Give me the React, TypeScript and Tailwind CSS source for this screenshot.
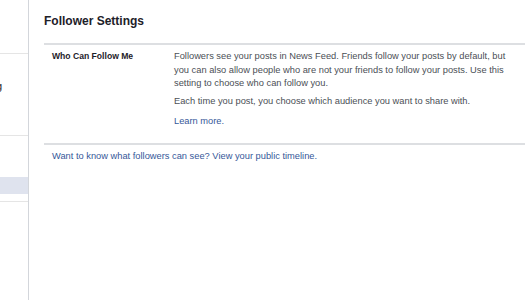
export default function App() {
  return (
    <div
      className="flex h-[300px] w-[525px] overflow-hidden bg-white text-[#1d2129]"
      style={{ fontFamily: '"Liberation Sans", Arial, sans-serif' }}
    >
      {/* left nav, mostly cut off */}
      <aside className="flex w-[29px] shrink-0 flex-col border-r border-[#d3d6db]">
        <div className="h-[54px] border-b border-[#e5e5e5]" />
        <div className="flex h-[82px] items-start border-b border-[#e5e5e5] pt-[25px]">
          <span className="-ml-[4px] text-[11px] leading-[14px] text-[#1d2129]">g</span>
        </div>
        <div className="h-[41px]" />
        <div className="h-[17px] bg-[#dfe3ee]" />
        <div className="h-[7px]" />
        <div className="border-t border-[#e5e5e5]" />
      </aside>

      <main className="flex-1 pl-[15px] pt-[13px]">
        <h2 className="text-[12px] font-bold leading-[16px] text-[#1d2129]">Follower Settings</h2>
        <div className="mt-[14px] border-t-2 border-[#dddfe2]" />

        <div className="flex pb-[14px] pt-[5px] text-[9.3px] leading-[13.5px]">
          <div className="w-[130px] shrink-0 pl-[8px] text-[8.6px] font-bold text-[#1d2129]">Who Can Follow Me</div>
          <div className="w-[336px] text-[#4b4f56]">
            <p>
              Followers see your posts in News Feed. Friends follow your posts by default, but you can also allow
              people who are not your friends to follow your posts. Use this setting to choose who can follow you.
            </p>
            <p className="mt-[4.5px]">Each time you post, you choose which audience you want to share with.</p>
            <p className="mt-[6.5px]">
              <a className="text-[#365899]">Learn more.</a>
            </p>
          </div>
        </div>

        <div className="border-t-2 border-[#dddfe2]" />
        <p className="pl-[8px] pt-[5px] text-[9.3px] leading-[13.5px] text-[#365899]">
          Want to know what followers can see? View your public timeline.
        </p>
      </main>
    </div>
  );
}
